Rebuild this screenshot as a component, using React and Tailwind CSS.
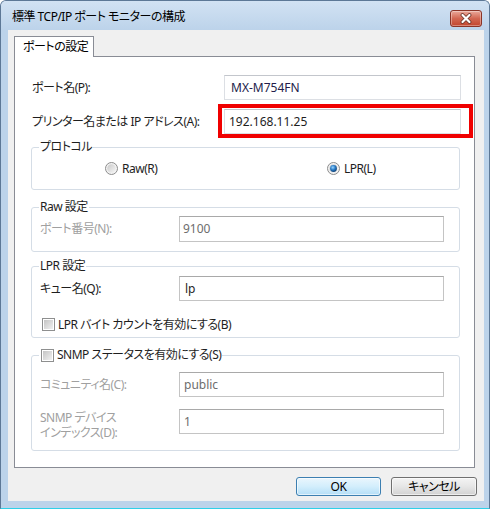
import React from "react";

const FONT = "font-['Noto_Sans','Noto_Sans_CJK_JP',sans-serif] [font-feature-settings:'palt']";

function Radio({ checked, id }) {
  return (
    <svg width="13" height="13" viewBox="0 0 13 13" className="shrink-0">
      <defs>
        <linearGradient id={`rf${id}`} x1="0" y1="0" x2="1" y2="1">
          <stop offset="0" stopColor="#c9c9c9" />
          <stop offset="1" stopColor="#f6f6f6" />
        </linearGradient>
        <radialGradient id={`rd${id}`} cx="0.4" cy="0.35" r="0.7">
          <stop offset="0" stopColor="#9ad6ff" />
          <stop offset="0.5" stopColor="#2a7cc7" />
          <stop offset="1" stopColor="#0b3b6e" />
        </radialGradient>
      </defs>
      <circle cx="6.5" cy="6.5" r="6" fill="#f2f2f2" stroke="#8c8c8c" />
      <circle cx="6.5" cy="6.5" r="4.3" fill={`url(#rf${id})`} />
      {checked && <circle cx="6.5" cy="6.5" r="3.4" fill={`url(#rd${id})`} />}
    </svg>
  );
}

function CheckBox({ id }) {
  return (
    <svg width="13" height="13" viewBox="0 0 13 13" className="shrink-0">
      <defs>
        <linearGradient id={`cb${id}`} x1="0" y1="0" x2="1" y2="1">
          <stop offset="0" stopColor="#c4c4c4" />
          <stop offset="1" stopColor="#f1f1f1" />
        </linearGradient>
      </defs>
      <rect x="0.5" y="0.5" width="12" height="12" fill="#ffffff" stroke="#8e8f8f" />
      <rect x="2" y="2" width="9" height="9" fill={`url(#cb${id})`} />
    </svg>
  );
}

function TextBox({ value, cls }) {
  return (
    <div className={`flex items-center bg-white border leading-[16px] tracking-normal ${cls}`}>
      {value}
    </div>
  );
}

function Group({ cls, legend, children }) {
  return (
    <div className={`relative ml-[16px] w-[429px] border border-[#d5dde6] rounded-[3px] ${cls}`}>
      <div className="absolute left-[7px] -top-[9px] h-[16px] px-[1px] bg-white flex items-center leading-[16px] text-[#1e1e1e]">
        {legend}
      </div>
      {children}
    </div>
  );
}

export default function App() {
  return (
    <div className={`w-[490px] h-[510px] bg-white ${FONT} text-[12px] tracking-[-0.5px] text-[#1e1e1e]`}>
      <div className="w-[490px] h-[509px] flex flex-col bg-[#bcd3ea] border border-[#5d7896] border-b-[#2fd0e8] rounded-t-[6px] overflow-hidden">
        {/* Title bar */}
        <div className="h-[29px] shrink-0 flex items-start bg-gradient-to-b from-[#d2e2f3] to-[#bcd3ea]">
          <div className="pl-[11px] pt-[8px] leading-[16px] text-black">標準 TCP/IP ポート モニターの構成</div>
          <div className="ml-auto mr-[7px] mt-[9px] w-[32px] h-[17px] rounded-[3px] border border-[#8a3427] bg-gradient-to-b from-[#eaa99b] via-[#d26752] to-[#c2442c] flex items-center justify-center shadow-[inset_0_0_0_1px_rgba(255,255,255,0.35)]">
            <svg width="14" height="11" viewBox="0 0 14 11">
              <path d="M3.5 2 L10.5 9 M10.5 2 L3.5 9" stroke="#6b3328" strokeWidth="3.8" strokeLinecap="round" />
              <path d="M3.5 2 L10.5 9 M10.5 2 L3.5 9" stroke="#ffffff" strokeWidth="2.2" strokeLinecap="round" />
            </svg>
          </div>
        </div>

        {/* Client area */}
        <div className="ml-[7px] mr-[5px] h-[471px] shrink-0 bg-[#f0f0f0] flex flex-col pl-[6px] pt-[6px]">
          {/* Tab */}
          <div className="relative z-10 -mb-px w-[80px] h-[21px] border border-b-0 border-[#898c95] bg-white pl-[8px] leading-[20px] text-black">
            ポートの設定
          </div>
          {/* Panel */}
          <div className="w-[461px] h-[412px] border border-[#898c95] bg-white flex flex-col">
            <div className="mt-[18px] ml-[17px] flex items-center h-[25px]">
              <div className="w-[192px]">ポート名(P):</div>
              <TextBox value="MX-M754FN" cls="w-[237px] h-[25px] pl-[6px] border-[#dcdfe4] border-t-[#c3c6cc] text-[#231d4a]" />
            </div>
            <div className="mt-[9px] ml-[17px] flex items-center h-[25px]">
              <div className="w-[192px]">プリンター名または IP アドレス(A):</div>
              <div className="relative">
                <TextBox value="192.168.11.25" cls="w-[237px] h-[25px] pl-[4px] border-[#dcdfe4] border-t-[#c3c6cc] text-[#1e1e1e]" />
                <div className="absolute -left-[6px] -right-[12px] -top-[5px] -bottom-[4px] border-[4px] border-[#f00000] pointer-events-none" />
              </div>
            </div>

            <Group cls="mt-[13px] h-[43px]" legend="プロトコル">
              <div className="h-full flex items-center pl-[73px]">
                <div className="w-[222px] flex items-center gap-[4px]">
                  <Radio id="a" checked={false} />
                  <span>Raw(R)</span>
                </div>
                <div className="flex items-center gap-[4px]">
                  <Radio id="b" checked={true} />
                  <span>LPR(L)</span>
                </div>
              </div>
            </Group>

            <Group cls="mt-[17px] h-[45px]" legend="Raw 設定">
              <div className="pt-[8px] pl-[8px] flex items-center">
                <div className="w-[139px] text-[#a0a0a0]">ポート番号(N):</div>
                <TextBox value="9100" cls="w-[265px] h-[26px] pl-[3px] border-[#c4c4c4] border-t-[#a9a9a9] text-[#6d6d6d]" />
              </div>
            </Group>

            <Group cls="mt-[14px] h-[72px]" legend="LPR 設定">
              <div className="pt-[9px] pl-[8px] flex items-center">
                <div className="w-[139px]">キュー名(Q):</div>
                <TextBox value="lp" cls="w-[265px] h-[25px] pl-[5px] border-[#c4c4c4] border-t-[#a9a9a9] text-[#1e1e1e]" />
              </div>
              <div className="mt-[17px] pl-[10px] h-[13px] flex items-center gap-[3px]">
                <CheckBox id="a" />
                <span className="leading-[16px]">LPR バイト カウントを有効にする(B)</span>
              </div>
            </Group>

            <Group
              cls="mt-[17px] h-[96px]"
              legend={
                <span className="flex items-center gap-[3px] pl-[1px]">
                  <CheckBox id="b" />
                  <span>SNMP ステータスを有効にする(S)</span>
                </span>
              }
            >
              <div className="pt-[16px] pl-[8px] flex items-center">
                <div className="w-[139px] text-[#a0a0a0]">コミュニティ名(C):</div>
                <TextBox value="public" cls="w-[265px] h-[25px] pl-[4px] border-[#c4c4c4] border-t-[#a9a9a9] text-[#6d6d6d]" />
              </div>
              <div className="mt-[12px] pl-[8px] flex items-start">
                <div className="w-[139px] text-[#a0a0a0] leading-[15px] pt-[1px]">
                  SNMP デバイス
                  <br />
                  インデックス(D):
                </div>
                <TextBox value="1" cls="w-[265px] h-[25px] pl-[4px] border-[#c4c4c4] border-t-[#a9a9a9] text-[#6d6d6d]" />
              </div>
            </Group>
          </div>

          {/* Buttons */}
          <div className="mt-[9px] flex justify-end gap-[10px] pr-[7px]">
            <div className="w-[85px] h-[19px] rounded-[3px] border border-[#3c7fb1] bg-gradient-to-b from-[#eaf6fd] via-[#d3eefc] to-[#b4def7] shadow-[inset_0_0_0_1px_rgba(255,255,255,0.6)] flex items-center justify-center leading-[16px] text-black">
              OK
            </div>
            <div className="w-[86px] h-[19px] rounded-[3px] border border-[#707070] bg-gradient-to-b from-[#f4f4f4] via-[#e6e6e6] to-[#d2d2d2] shadow-[inset_0_0_0_1px_rgba(255,255,255,0.6)] flex items-center justify-center leading-[16px] text-black">
              キャンセル
            </div>
          </div>
        </div>
      </div>
    </div>
  );
}
